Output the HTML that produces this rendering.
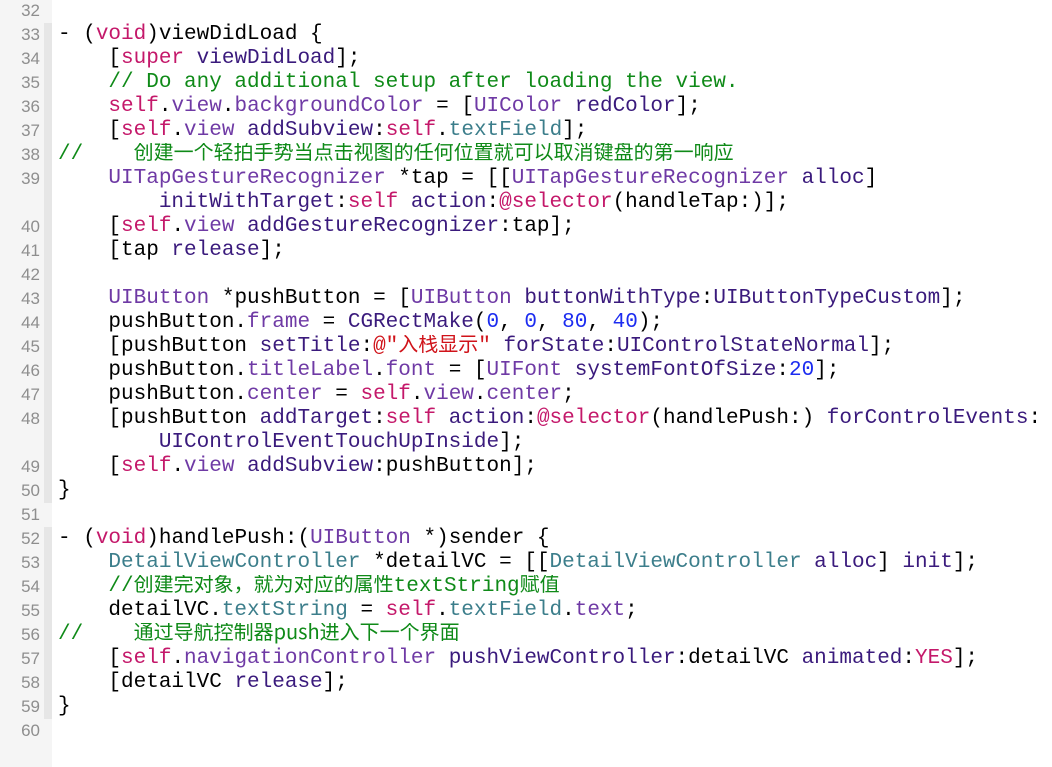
<!DOCTYPE html>
<html><head><meta charset="utf-8"><style>
html,body{margin:0;background:#fff;width:1052px;height:742px;overflow:hidden}
#w{position:absolute;top:-1px;left:0}
.r{position:relative;height:24px;width:1052px;overflow:hidden}
.g{position:absolute;left:0;top:0;width:44px;height:24px;background:#f5f5f5;color:#8e8e8e;font:17px/24px "Liberation Sans","DejaVu Sans",sans-serif;text-align:right;box-sizing:border-box;padding-right:4px}
.f{position:absolute;left:44px;top:0;width:8px;height:24px;background:#f5f5f5}
.f.on{background:#e6e6e6}
.c{position:absolute;left:58px;top:0;height:24px;white-space:pre;font:21px/24px "Liberation Mono","Noto Sans CJK SC",monospace;color:#000}
.k{color:#c4186a}.m{color:#3a1a7c}.p{color:#6f3aa5}.cm{color:#0f8a18}.t{color:#3c7e8b}.n{color:#1c2cf0}.s{color:#d0131a}
.z{font-family:"Noto Sans CJK SC",sans-serif;font-size:20px;line-height:0}
</style></head><body><div id="w">
<div class="r"><div class="g">32</div><div class="f"></div><div class="c"></div></div>
<div class="r"><div class="g">33</div><div class="f on"></div><div class="c">- (<span class="k">void</span>)viewDidLoad {</div></div>
<div class="r"><div class="g">34</div><div class="f on"></div><div class="c">    [<span class="k">super</span> <span class="m">viewDidLoad</span>];</div></div>
<div class="r"><div class="g">35</div><div class="f on"></div><div class="c cm">    // Do any additional setup after loading the view.</div></div>
<div class="r"><div class="g">36</div><div class="f on"></div><div class="c">    <span class="k">self</span>.<span class="p">view</span>.<span class="p">backgroundColor</span> = [<span class="p">UIColor</span> <span class="m">redColor</span>];</div></div>
<div class="r"><div class="g">37</div><div class="f on"></div><div class="c">    [<span class="k">self</span>.<span class="p">view</span> <span class="m">addSubview</span>:<span class="k">self</span>.<span class="t">textField</span>];</div></div>
<div class="r"><div class="g">38</div><div class="f on"></div><div class="c cm">//    <span class="z">创建一个轻拍手势当点击视图的任何位置就可以取消键盘的第一响应</span></div></div>
<div class="r"><div class="g">39</div><div class="f on"></div><div class="c">    <span class="p">UITapGestureRecognizer</span> *tap = [[<span class="p">UITapGestureRecognizer</span> <span class="m">alloc</span>]</div></div>
<div class="r"><div class="g"></div><div class="f on"></div><div class="c">        <span class="m">initWithTarget</span>:<span class="k">self</span> <span class="m">action</span>:<span class="k">@selector</span>(handleTap:)];</div></div>
<div class="r"><div class="g">40</div><div class="f on"></div><div class="c">    [<span class="k">self</span>.<span class="p">view</span> <span class="m">addGestureRecognizer</span>:tap];</div></div>
<div class="r"><div class="g">41</div><div class="f on"></div><div class="c">    [tap <span class="m">release</span>];</div></div>
<div class="r"><div class="g">42</div><div class="f on"></div><div class="c"></div></div>
<div class="r"><div class="g">43</div><div class="f on"></div><div class="c">    <span class="p">UIButton</span> *pushButton = [<span class="p">UIButton</span> <span class="m">buttonWithType</span>:<span class="m">UIButtonTypeCustom</span>];</div></div>
<div class="r"><div class="g">44</div><div class="f on"></div><div class="c">    pushButton.<span class="p">frame</span> = <span class="m">CGRectMake</span>(<span class="n">0</span>, <span class="n">0</span>, <span class="n">80</span>, <span class="n">40</span>);</div></div>
<div class="r"><div class="g">45</div><div class="f on"></div><div class="c">    [pushButton <span class="m">setTitle</span>:<span class="s">@"<span class="z">入栈显示</span>"</span> <span class="m">forState</span>:<span class="m">UIControlStateNormal</span>];</div></div>
<div class="r"><div class="g">46</div><div class="f on"></div><div class="c">    pushButton.<span class="p">titleLabel</span>.<span class="p">font</span> = [<span class="p">UIFont</span> <span class="m">systemFontOfSize</span>:<span class="n">20</span>];</div></div>
<div class="r"><div class="g">47</div><div class="f on"></div><div class="c">    pushButton.<span class="p">center</span> = <span class="k">self</span>.<span class="p">view</span>.<span class="p">center</span>;</div></div>
<div class="r"><div class="g">48</div><div class="f on"></div><div class="c">    [pushButton <span class="m">addTarget</span>:<span class="k">self</span> <span class="m">action</span>:<span class="k">@selector</span>(handlePush:) <span class="m">forControlEvents</span>:</div></div>
<div class="r"><div class="g"></div><div class="f on"></div><div class="c">        <span class="m">UIControlEventTouchUpInside</span>];</div></div>
<div class="r"><div class="g">49</div><div class="f on"></div><div class="c">    [<span class="k">self</span>.<span class="p">view</span> <span class="m">addSubview</span>:pushButton];</div></div>
<div class="r"><div class="g">50</div><div class="f on"></div><div class="c">}</div></div>
<div class="r"><div class="g">51</div><div class="f"></div><div class="c"></div></div>
<div class="r"><div class="g">52</div><div class="f on"></div><div class="c">- (<span class="k">void</span>)handlePush:(<span class="p">UIButton</span> *)sender {</div></div>
<div class="r"><div class="g">53</div><div class="f on"></div><div class="c">    <span class="t">DetailViewController</span> *detailVC = [[<span class="t">DetailViewController</span> <span class="m">alloc</span>] <span class="m">init</span>];</div></div>
<div class="r"><div class="g">54</div><div class="f on"></div><div class="c cm">    //<span class="z">创建完对象，就为对应的属性</span>textString<span class="z">赋值</span></div></div>
<div class="r"><div class="g">55</div><div class="f on"></div><div class="c">    detailVC.<span class="t">textString</span> = <span class="k">self</span>.<span class="t">textField</span>.<span class="p">text</span>;</div></div>
<div class="r"><div class="g">56</div><div class="f on"></div><div class="c cm">//    <span class="z">通过导航控制器push进入下一个界面</span></div></div>
<div class="r"><div class="g">57</div><div class="f on"></div><div class="c">    [<span class="k">self</span>.<span class="p">navigationController</span> <span class="m">pushViewController</span>:detailVC <span class="m">animated</span>:<span class="k">YES</span>];</div></div>
<div class="r"><div class="g">58</div><div class="f on"></div><div class="c">    [detailVC <span class="m">release</span>];</div></div>
<div class="r"><div class="g">59</div><div class="f on"></div><div class="c">}</div></div>
<div class="r"><div class="g">60</div><div class="f"></div><div class="c"></div></div>
<div class="r"><div class="g"></div><div class="f"></div><div class="c"></div></div>
</div></body></html>
